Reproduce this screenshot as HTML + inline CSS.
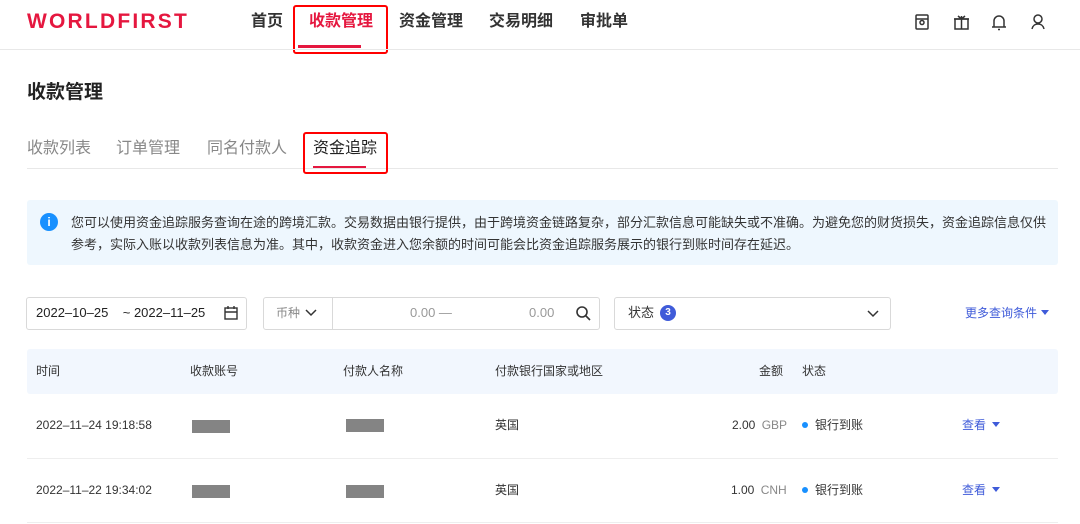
<!DOCTYPE html>
<html><head><meta charset="utf-8"><style>
*{margin:0;padding:0;box-sizing:border-box}
body{width:1080px;height:524px;overflow:hidden;background:#fff;font-family:"Liberation Sans","Noto Sans CJK SC",sans-serif;color:#222;position:relative}
.a{position:absolute;white-space:nowrap}
.nav{font-size:16px;font-weight:bold;color:#333;top:12px;line-height:20px}
.tab{font-size:16px;color:#888;top:139px;line-height:20px}
.th{font-size:12px;color:#333;top:364px;line-height:14px}
.td{font-size:12px;color:#333;line-height:14px}
.blur{position:absolute;background:#777;height:13px;width:38px;opacity:.9}
.box{position:absolute;border:1px solid #d9d9d9;border-radius:3px;top:297px;height:33px}
.f{line-height:16px;top:305px}
</style></head><body>
<div class="a" style="left:27px;top:10px;font-size:21px;line-height:24px;font-weight:bold;color:#e5173f;letter-spacing:2.2px">WORLDFIRST</div>
<div class="a nav" style="left:251px">首页</div>
<div class="a nav" style="left:309px;color:#e5173f">收款管理</div>
<div class="a nav" style="left:399px">资金管理</div>
<div class="a nav" style="left:489px">交易明细</div>
<div class="a nav" style="left:580px">审批单</div>
<div class="a" style="left:298px;top:45px;width:63px;height:3px;background:#e5173f"></div>
<div class="a" style="left:293px;top:5px;width:95px;height:49px;border:2px solid #f00;border-radius:3px"></div>
<div class="a" style="left:0;top:49px;width:1080px;height:1px;background:#e8e8e8"></div>
<svg class="a" style="left:912px;top:12px" width="140" height="20" fill="none" stroke="#333" stroke-width="1.5">
<rect x="4" y="3" width="12" height="14" rx="1"/><path d="M4 7h12"/><circle cx="10" cy="10.5" r="2"/>
<rect x="43" y="7" width="13" height="10"/><path d="M42 7h15M49.5 4v13M46 4l3.5 3 3.5-3"/>
<path d="M82 15V9a5 5 0 0 1 10 0v6zM80 15h14M86 17.5h2"/>
<circle cx="126" cy="7" r="4"/><path d="M120 17c1-4 3-5 6-5s5 1 6 5"/>
</svg>
<div class="a" style="left:27px;top:81px;font-size:19px;line-height:24px;font-weight:bold">收款管理</div>
<div class="a tab" style="left:27px">收款列表</div>
<div class="a tab" style="left:116px">订单管理</div>
<div class="a tab" style="left:207px">同名付款人</div>
<div class="a tab" style="left:313px;color:#222">资金追踪</div>
<div class="a" style="left:27px;top:168px;width:1031px;height:1px;background:#e8e8e8"></div>
<div class="a" style="left:313px;top:166px;width:53px;height:2px;background:#e5173f"></div>
<div class="a" style="left:303px;top:132px;width:85px;height:42px;border:2px solid #f00;border-radius:3px"></div>
<div class="a" style="left:27px;top:200px;width:1031px;height:65px;background:#eef7fe;border-radius:3px"></div>
<div class="a" style="left:40px;top:213px;width:18px;height:18px;border-radius:50%;background:#1890ff;color:#fff;font-size:12px;font-weight:bold;text-align:center;line-height:18px">i</div>
<div class="a" style="left:71px;top:212px;font-size:13px;line-height:22px;color:#333">您可以使用资金追踪服务查询在途的跨境汇款。交易数据由银行提供，由于跨境资金链路复杂，部分汇款信息可能缺失或不准确。为避免您的财货损失，资金追踪信息仅供<br>参考，实际入账以收款列表信息为准。其中，收款资金进入您余额的时间可能会比资金追踪服务展示的银行到账时间存在延迟。</div>
<div class="box" style="left:26px;width:221px"></div>
<div class="a f" style="left:36px;font-size:13px">2022–10–25 &nbsp;&nbsp; ~ 2022–11–25</div>
<svg class="a" style="left:223px;top:305px" width="16" height="16" fill="none" stroke="#333" stroke-width="1.4"><rect x="2" y="3" width="12" height="11"/><path d="M2 7h12M5 1v3M11 1v3"/></svg>
<div class="box" style="left:263px;width:337px"></div>
<div class="a" style="left:332px;top:297px;width:1px;height:33px;background:#d9d9d9"></div>
<div class="a f" style="left:276px;font-size:12px;color:#888">币种</div>
<svg class="a" style="left:304px;top:308px" width="14" height="10" fill="none" stroke="#333" stroke-width="1.5"><path d="M2 2l5 5 5-5"/></svg>
<div class="a f" style="left:410px;font-size:13px;color:#999">0.00 —</div>
<div class="a f" style="left:529px;font-size:13px;color:#999">0.00</div>
<svg class="a" style="left:575px;top:305px" width="16" height="16" fill="none" stroke="#333" stroke-width="1.6"><circle cx="7" cy="7" r="5"/><path d="M11 11l4 4"/></svg>
<div class="box" style="left:614px;width:277px"></div>
<div class="a f" style="left:628px;font-size:13px;color:#333">状态</div>
<div class="a" style="left:660px;top:305px;width:16px;height:16px;border-radius:50%;background:#3f5bd9;color:#fff;font-size:10px;font-weight:bold;text-align:center;line-height:16px">3</div>
<svg class="a" style="left:866px;top:309px" width="14" height="10" fill="none" stroke="#333" stroke-width="1.5"><path d="M2 2l5 5 5-5"/></svg>
<div class="a f" style="left:965px;font-size:12px;color:#3f5bd9">更多查询条件</div>
<div class="a" style="left:1041px;top:310px;border:4px solid transparent;border-top:5px solid #3f5bd9"></div>
<div class="a" style="left:27px;top:349px;width:1031px;height:45px;background:#f2f7fe;border-radius:3px"></div>
<div class="a th" style="left:36px">时间</div>
<div class="a th" style="left:190px">收款账号</div>
<div class="a th" style="left:343px">付款人名称</div>
<div class="a th" style="left:495px">付款银行国家或地区</div>
<div class="a th" style="left:759px">金额</div>
<div class="a th" style="left:802px">状态</div>
<div class="a td" style="left:36px;top:418px">2022–11–24 19:18:58</div>
<div class="blur" style="left:192px;top:420px"></div>
<div class="blur" style="left:346px;top:419px"></div>
<div class="a td" style="left:495px;top:418px">英国</div>
<div class="a td" style="left:732px;top:418px">2.00 <span style="color:#888;margin-left:3px">GBP</span></div>
<div class="a" style="left:802px;top:422px;width:6px;height:6px;border-radius:50%;background:#1890ff"></div>
<div class="a td" style="left:815px;top:418px">银行到账</div>
<div class="a td" style="left:962px;top:418px;color:#3f5bd9">查看</div>
<div class="a" style="left:992px;top:422px;border:4px solid transparent;border-top:5px solid #3f5bd9"></div>
<div class="a" style="left:27px;top:458px;width:1031px;height:1px;background:#eee"></div>
<div class="a td" style="left:36px;top:483px">2022–11–22 19:34:02</div>
<div class="blur" style="left:192px;top:485px"></div>
<div class="blur" style="left:346px;top:485px"></div>
<div class="a td" style="left:495px;top:483px">英国</div>
<div class="a td" style="left:731px;top:483px">1.00 <span style="color:#888;margin-left:3px">CNH</span></div>
<div class="a" style="left:802px;top:487px;width:6px;height:6px;border-radius:50%;background:#1890ff"></div>
<div class="a td" style="left:815px;top:483px">银行到账</div>
<div class="a td" style="left:962px;top:483px;color:#3f5bd9">查看</div>
<div class="a" style="left:992px;top:487px;border:4px solid transparent;border-top:5px solid #3f5bd9"></div>
<div class="a" style="left:27px;top:522px;width:1031px;height:1px;background:#eee"></div>
</body></html>
